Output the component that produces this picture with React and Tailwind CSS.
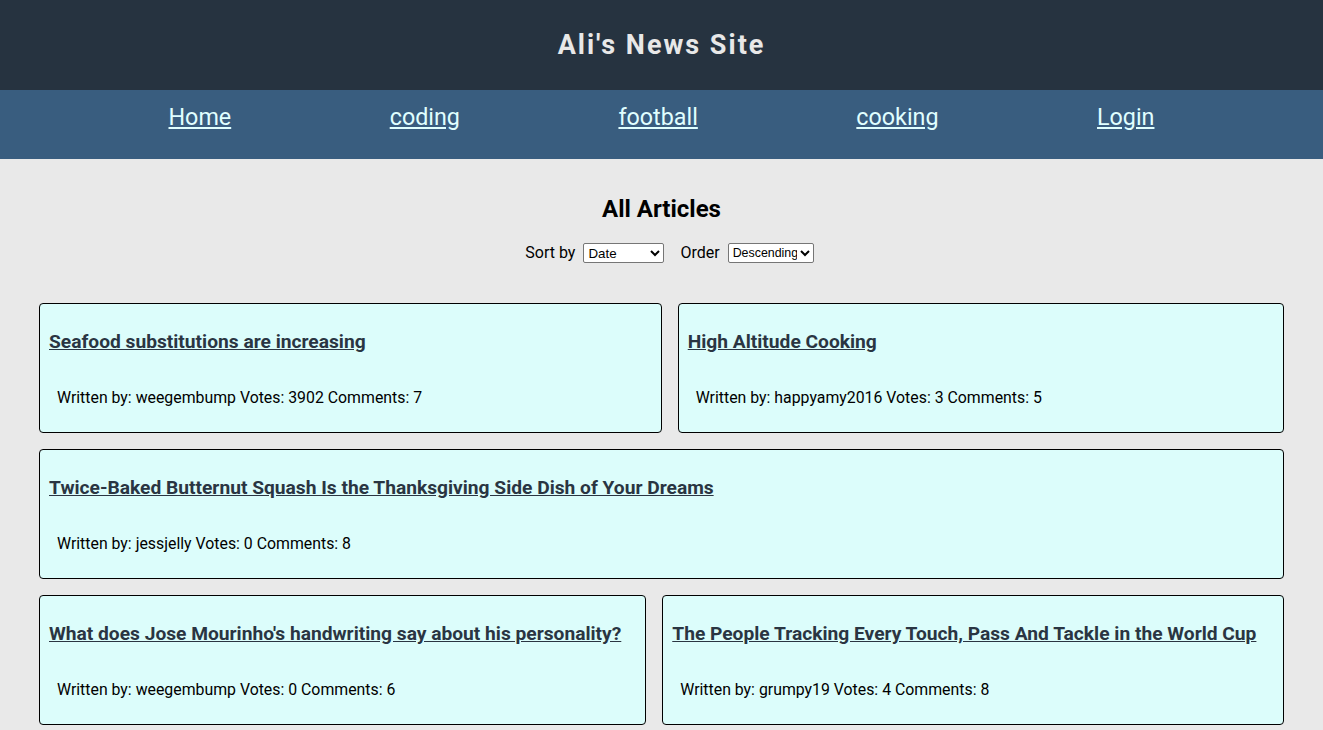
import React from 'react'

const ROWS = [
  [
    { title: 'Seafood substitutions are increasing', author: 'weegembump', votes: 3902, comments: 7, grow: 'flex-[623_1_0%]' },
    { title: 'High Altitude Cooking', author: 'happyamy2016', votes: 3, comments: 5, grow: 'flex-[606_1_0%]' },
  ],
  [
    { title: 'Twice-Baked Butternut Squash Is the Thanksgiving Side Dish of Your Dreams', author: 'jessjelly', votes: 0, comments: 8, grow: 'flex-1' },
  ],
  [
    { title: "What does Jose Mourinho's handwriting say about his personality?", author: 'weegembump', votes: 0, comments: 6, grow: 'flex-[607_1_0%]' },
    { title: 'The People Tracking Every Touch, Pass And Tackle in the World Cup', author: 'grumpy19', votes: 4, comments: 8, grow: 'flex-[622_1_0%]' },
  ],
]

const NAV = ['Home', 'coding', 'football', 'cooking', 'Login']

function ArticleCard({ article }) {
  return (
    <div className={`${article.grow} h-[130px] bg-[#dcfdfb] border border-black rounded-[4px] flex flex-col px-[9px]`}>
      <a href="#" className="mt-[27px] text-[19.2px] leading-[22px] font-bold text-[#2a3542] underline">
        {article.title}
      </a>
      <p className="mt-[33px] ml-2 text-[15.85px] leading-6 text-black">
        Written by: {article.author} Votes: {article.votes} Comments: {article.comments}
      </p>
    </div>
  )
}

export default function App() {
  return (
    <div className="min-h-[730px] bg-[#e9e9e9] font-['Roboto',sans-serif]">
      <header className="h-[90px] bg-[#263340] flex items-center justify-center">
        <h1 className="text-[27px] font-bold tracking-[2px] text-[#e8e8e8]">Ali's News Site</h1>
      </header>

      <nav className="h-[69px] bg-[#395d7f] flex justify-evenly px-[10px] pt-[13px]">
        {NAV.map(item => (
          <a key={item} href="#" className="text-[23.3px] leading-[28px] text-[#e0ffff] underline">
            {item}
          </a>
        ))}
      </nav>

      <main className="px-[39px]">
        <h2 className="pt-[36px] text-center text-2xl leading-[28px] font-bold text-black">All Articles</h2>

        <div className="mt-[18px] pl-4 flex items-center justify-center text-base text-black">
          <label className="mr-2">Sort by</label>
          <select className="w-[81px] h-[20px] px-0 text-[13.33px] bg-white border border-[#767676] rounded-[2px] font-['Liberation_Sans',sans-serif]">
            <option>Date</option>
          </select>
          <label className="ml-4 mr-2">Order</label>
          <select className="w-[86px] h-[20px] px-0 text-[12.4px] bg-white border border-[#767676] rounded-[2px] font-['Liberation_Sans',sans-serif]">
            <option>Descending</option>
          </select>
        </div>

        <div className="mt-[38px] flex flex-col gap-4 pb-4">
          {ROWS.map((row, i) => (
            <div key={i} className="flex gap-4">
              {row.map(a => (
                <ArticleCard key={a.title} article={a} />
              ))}
            </div>
          ))}
        </div>
      </main>
    </div>
  )
}
